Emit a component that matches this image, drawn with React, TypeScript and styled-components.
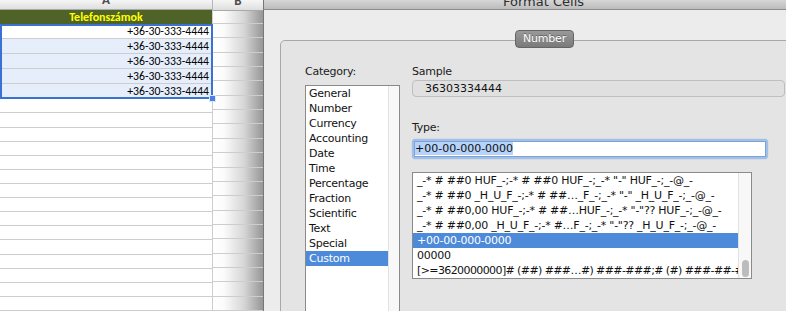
import styled, { createGlobalStyle } from "styled-components";

const ui = `"Lucida Grande", "DejaVu Sans", sans-serif`;
const sheetFont = `Calibri, Carlito, "Liberation Sans", Arial, sans-serif`;

const GlobalStyle = createGlobalStyle`
  html, body {
    margin: 0;
    padding: 0;
    background: #fff;
    overflow: hidden;
  }
`;

const Page = styled.div`
  display: flex;
  width: 786px;
  height: 311px;
  overflow: hidden;
`;

/* ---------- spreadsheet ---------- */

const Sheet = styled.div`
  display: flex;
  flex: none;
  width: 263px;
`;

const Column = styled.div<{ width: number }>`
  display: flex;
  flex-direction: column;
  flex: none;
  width: ${({ width }) => `${width}px`};
`;

const HeadCell = styled.div<{ divider?: boolean }>`
  display: flex;
  align-items: flex-end;
  justify-content: center;
  height: 11px;
  box-sizing: border-box;
  overflow: hidden;
  border-bottom: 1px solid #a9a9a9;
  border-right: ${({ divider }) => (divider ? "1px solid #b8b8b8" : "none")};
  background: linear-gradient(#f6f6f6, #dedede);
`;

const HeadLabel = styled.span`
  margin-bottom: 4px;
  font: bold 13px/10px ${sheetFont};
  color: #4d4d4d;
`;

const TitleCell = styled.div`
  height: 14px;
  border-right: 1px solid #cfcfcf;
  background: #4f6228;
  color: #ffff00;
  font: bold 12px/14px ${sheetFont};
  text-align: center;
`;

const Cell = styled.div<{ tinted?: boolean; divider?: boolean; shade?: boolean }>`
  height: 15px;
  box-sizing: border-box;
  padding-right: 3px;
  border-bottom: 1px solid #cdcdcd;
  border-right: ${({ divider }) => (divider ? "1px solid #cdcdcd" : "none")};
  background: ${({ tinted, shade }) =>
    shade
      ? "linear-gradient(to right, #ffffff 0%, #fbfbfb 22%, #d6d6d6 62%, #969696 100%)"
      : tinted
      ? "#e6eefb"
      : "#fff"};
  font: 11.7px/14px ${sheetFont};
  color: #000;
  text-align: right;
  white-space: nowrap;
`;

const Selection = styled.div`
  position: relative;

  &::after {
    content: "";
    position: absolute;
    inset: 0 0 0 0;
    border: 2px solid #3a72d3;
    pointer-events: none;
  }
`;

const FillHandle = styled.span`
  position: absolute;
  right: -3px;
  bottom: -3px;
  z-index: 2;
  width: 5px;
  height: 5px;
  background: #4a80dc;
  border: 1px solid #dbe6f8;
`;

/* ---------- dialog ---------- */

const Dialog = styled.div`
  display: flex;
  flex-direction: column;
  flex: 1;
  min-width: 0;
  overflow: hidden;
  border-left: 1px solid #777;
  background: #ececec;
`;

const TitleBar = styled.div`
  flex: none;
  height: 9px;
  padding-left: 239px;
  overflow: hidden;
  border-bottom: 1px solid #8c8c8c;
  background: linear-gradient(#d6d6d6, #bcbcbc);
`;

const Title = styled.div`
  margin-top: -5px;
  font: 13px/13px ${ui};
  color: #2e2e2e;
  white-space: nowrap;
`;

const Body = styled.div`
  display: flex;
  flex: 1;
  padding: 30px 0 0 16px;
`;

const GroupBox = styled.div`
  display: flex;
  flex-direction: column;
  flex: none;
  width: 529px;
  height: 320px;
  box-sizing: border-box;
  border: 1px solid #a8a8a8;
  border-radius: 5px;
  background: #e4e4e4;
`;

const Tab = styled.div`
  align-self: center;
  height: 18px;
  box-sizing: border-box;
  margin-top: -11px;
  padding: 0 7px;
  border: 1px solid #656565;
  border-radius: 4px;
  background: linear-gradient(#999, #7a7a7a);
  color: #fff;
  font: 11px/16px ${ui};
  letter-spacing: -0.2px;
  text-shadow: 0 -1px 0 rgba(0, 0, 0, 0.35);
`;

const Content = styled.div`
  display: grid;
  grid-template-columns: 95px 373px;
  column-gap: 12px;
  padding: 17px 0 0 24px;
`;

const Stack = styled.div`
  display: flex;
  flex-direction: column;
`;

const Label = styled.div<{ gap?: number }>`
  margin-top: ${({ gap }) => `${gap ?? 0}px`};
  font: 11px/14px ${ui};
  letter-spacing: -0.25px;
  color: #1a1a1a;
`;

const ListBox = styled.div<{ width: number; height: number; offset: number }>`
  display: flex;
  width: ${({ width }) => `${width}px`};
  height: ${({ height }) => `${height}px`};
  box-sizing: border-box;
  margin-top: ${({ offset }) => `${offset}px`};
  overflow: hidden;
  border: 1px solid #8a8a8a;
  background: #fff;
`;

const Items = styled.div`
  flex: 1;
  min-width: 0;
`;

const Item = styled.div<{ selected?: boolean; pad: number; tight?: boolean }>`
  height: 15px;
  padding-left: ${({ pad }) => `${pad}px`};
  overflow: hidden;
  background: ${({ selected }) => (selected ? "#4d8ad9" : "transparent")};
  color: ${({ selected }) => (selected ? "#fff" : "#111")};
  font: 11px/15px ${ui};
  letter-spacing: ${({ tight }) => (tight ? "-0.6px" : "-0.25px")};
  white-space: nowrap;
`;

const Track = styled.div<{ width: number }>`
  display: flex;
  flex-direction: column;
  justify-content: flex-end;
  flex: none;
  width: ${({ width }) => `${width}px`};
  border-left: 1px solid #e2e2e2;
  background: #f8f8f8;
`;

const Thumb = styled.div`
  width: 7px;
  height: 17px;
  margin: 0 auto 1px;
  border-radius: 4px;
  background: #bcbcbc;
`;

const SampleBox = styled.div`
  height: 17px;
  box-sizing: border-box;
  margin-top: 1px;
  padding-left: 12px;
  border: 1px solid #bfbfbf;
  border-radius: 4px;
  background: #e0e0e0;
  font: 11px/15px ${ui};
  color: #111;
`;

const FocusRing = styled.div`
  width: 356px;
  box-sizing: border-box;
  margin-top: 4px;
  padding: 2px;
  border-radius: 4px;
  background: #9fc0ea;
  box-shadow: 0 0 1px #6d9ad6;
`;

const TypeField = styled.div`
  height: 16px;
  box-sizing: border-box;
  border: 1px solid #7fa2d3;
  background: #fff;
  font: 11px/14px ${ui};
  color: #111;
`;

const Highlight = styled.span`
  background: #b6d4fb;
`;

const categories = [
  "General",
  "Number",
  "Currency",
  "Accounting",
  "Date",
  "Time",
  "Percentage",
  "Fraction",
  "Scientific",
  "Text",
  "Special",
  "Custom",
];

const formats = [
  '_-* # ##0 HUF_-;-* # ##0 HUF_-;_-* "-" HUF_-;_-@_-',
  '_-* # ##0 _H_U_F_-;-* # ##…_F_-;_-* "-" _H_U_F_-;_-@_-',
  '_-* # ##0,00 HUF_-;-* # ##…HUF_-;_-* "-"?? HUF_-;_-@_-',
  '_-* # ##0,00 _H_U_F_-;-* #…F_-;_-* "-"?? _H_U_F_-;_-@_-',
  "+00-00-000-0000",
  "00000",
  "[>=3620000000]# (##) ###…#) ###-###;# (#) ###-##-##",
];

const phones = Array.from({ length: 5 }, () => "+36-30-333-4444");
const emptyRows = Array.from({ length: 15 }, (_, i) => i);

export default function App() {
  return (
    <>
      <GlobalStyle />
      <Page>
        <Sheet>
          <Column width={213}>
            <HeadCell divider>
              <HeadLabel>A</HeadLabel>
            </HeadCell>
            <TitleCell>Telefonszámok</TitleCell>
            <Selection>
              {phones.map((p, i) => (
                <Cell key={i} divider tinted={i > 0}>
                  {p}
                </Cell>
              ))}
              <FillHandle />
            </Selection>
            {emptyRows.map((i) => (
              <Cell key={i} divider />
            ))}
          </Column>
          <Column width={50}>
            <HeadCell>
              <HeadLabel>B</HeadLabel>
            </HeadCell>
            <Cell shade style={{ height: 14 }} />
            {phones.map((_, i) => (
              <Cell key={i} shade />
            ))}
            {emptyRows.map((i) => (
              <Cell key={i} shade />
            ))}
          </Column>
        </Sheet>

        <Dialog>
          <TitleBar>
            <Title>Format Cells</Title>
          </TitleBar>
          <Body>
            <GroupBox>
              <Tab>Number</Tab>
              <Content>
                <Stack>
                  <Label>Category:</Label>
                  <ListBox width={95} height={260} offset={6}>
                    <Items>
                      {categories.map((c) => (
                        <Item key={c} pad={3} selected={c === "Custom"}>
                          {c}
                        </Item>
                      ))}
                    </Items>
                    <Track width={10} />
                  </ListBox>
                </Stack>
                <Stack>
                  <Label>Sample</Label>
                  <SampleBox>36303334444</SampleBox>
                  <Label gap={24}>Type:</Label>
                  <FocusRing>
                    <TypeField>
                      <Highlight>+00-00-000-0000</Highlight>
                    </TypeField>
                  </FocusRing>
                  <ListBox width={340} height={107} offset={13}>
                    <Items>
                      {formats.map((f, i) => (
                        <Item key={i} pad={4} selected={i === 4} tight={i === 6}>
                          {f}
                        </Item>
                      ))}
                    </Items>
                    <Track width={12}>
                      <Thumb />
                    </Track>
                  </ListBox>
                </Stack>
              </Content>
            </GroupBox>
          </Body>
        </Dialog>
      </Page>
    </>
  );
}
